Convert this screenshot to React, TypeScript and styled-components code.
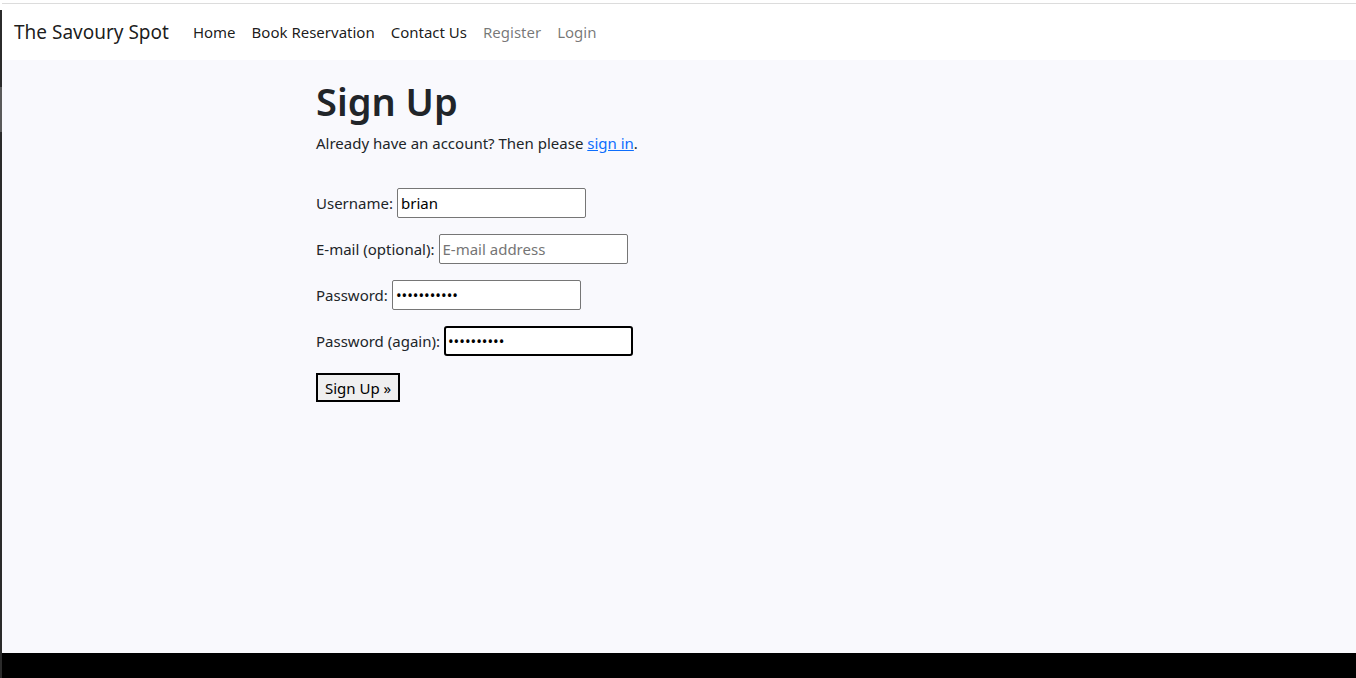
import React from "react";
import styled, { createGlobalStyle } from "styled-components";

const Global = createGlobalStyle`
  html, body { margin: 0; padding: 0; }
  body {
    font-family: "Noto Sans", "Open Sans", sans-serif;
    color: #212529;
    background: #f9f9fd;
  }
  * { box-sizing: border-box; }
`;

const Frame = styled.div`
  display: flex;
  width: 1356px;
  height: 678px;
  overflow: hidden;
`;

const Edge = styled.div`
  width: 2px;
  display: flex;
  flex-direction: column;
  background: #2b2b2b;
`;

const EdgeSeg = styled.div<{ $h: number; $c: string }>`
  height: ${(p) => p.$h}px;
  flex: none;
  background: ${(p) => p.$c};
`;

const Main = styled.div`
  flex: 1;
  display: flex;
  flex-direction: column;
  min-width: 0;
`;

const TopStrip = styled.div`
  height: 4px;
  background: #fff;
  border-bottom: 1px solid #dcdcdc;
`;

const Navbar = styled.nav`
  height: 56px;
  background: #fff;
  display: flex;
  align-items: center;
  padding: 0 12px;
`;

const Brand = styled.a`
  font-size: 19px;
  color: rgba(0, 0, 0, 0.9);
  text-decoration: none;
  margin-right: 16px;
  line-height: 30px;
`;

const NavList = styled.ul`
  display: flex;
  list-style: none;
  margin: 0;
  padding: 0;
`;

const NavLink = styled.a<{ $muted?: boolean }>`
  display: block;
  padding: 8px;
  font-size: 15px;
  text-decoration: none;
  color: ${(p) => (p.$muted ? "rgba(0,0,0,0.55)" : "rgba(0,0,0,0.9)")};
`;

const Content = styled.main`
  flex: 1;
  background: #f9f9fd;
  padding: 17px 0 0 314px;
`;

const Title = styled.h1`
  font-size: 38px;
  font-weight: 600;
  line-height: 48px;
  margin: 0 0 6px;
`;

const Lead = styled.p`
  font-size: 15px;
  line-height: 24px;
  margin: 0 0 33px;
  a { color: #0d6efd; }
`;

const Form = styled.form`
  display: flex;
  flex-direction: column;
  gap: 16px;
  align-items: flex-start;
`;

const Field = styled.label`
  display: flex;
  align-items: center;
  gap: 4px;
  font-size: 15px;
`;

const Input = styled.input<{ $focus?: boolean }>`
  width: 189px;
  height: 30px;
  font-family: inherit;
  font-size: 15px;
  padding: 1px ${(p) => (p.$focus ? 2 : 3)}px;
  background: #fff;
  color: #000;
  outline: none;
  border: ${(p) => (p.$focus ? "2px solid #000" : "1px solid #767676")};
  border-radius: ${(p) => (p.$focus ? 3 : 2)}px;
  &::placeholder { color: #757575; }
`;

const Button = styled.button`
  font-family: inherit;
  font-size: 15px;
  height: 29px;
  padding: 0 7px;
  background: #efefef;
  color: #000;
  border: 2px solid #000;
  border-radius: 0;
  margin-top: 1px;
`;

const Footer = styled.div`
  height: 25px;
  background: #000;
`;

export default function App() {
  return (
    <>
      <Global />
      <Frame>
        <Edge>
          <EdgeSeg $h={10} $c="#fff" />
          <EdgeSeg $h={77} $c="#2b2b2b" />
          <EdgeSeg $h={45} $c="#5a5a5a" />
        </Edge>
        <Main>
          <TopStrip />
          <Navbar>
            <Brand href="#">The Savoury Spot</Brand>
            <NavList>
              <li><NavLink href="#">Home</NavLink></li>
              <li><NavLink href="#">Book Reservation</NavLink></li>
              <li><NavLink href="#">Contact Us</NavLink></li>
              <li><NavLink href="#" $muted>Register</NavLink></li>
              <li><NavLink href="#" $muted>Login</NavLink></li>
            </NavList>
          </Navbar>
          <Content>
            <Title>Sign Up</Title>
            <Lead>
              Already have an account? Then please <a href="#">sign in</a>.
            </Lead>
            <Form onSubmit={(e) => e.preventDefault()}>
              <Field>
                Username: <Input type="text" defaultValue="brian" />
              </Field>
              <Field>
                E-mail (optional): <Input type="email" placeholder="E-mail address" />
              </Field>
              <Field>
                Password: <Input type="password" defaultValue="brian123456" />
              </Field>
              <Field>
                Password (again): <Input type="password" defaultValue="brian12345" $focus />
              </Field>
              <Button type="submit">Sign Up »</Button>
            </Form>
          </Content>
          <Footer />
        </Main>
      </Frame>
    </>
  );
}
